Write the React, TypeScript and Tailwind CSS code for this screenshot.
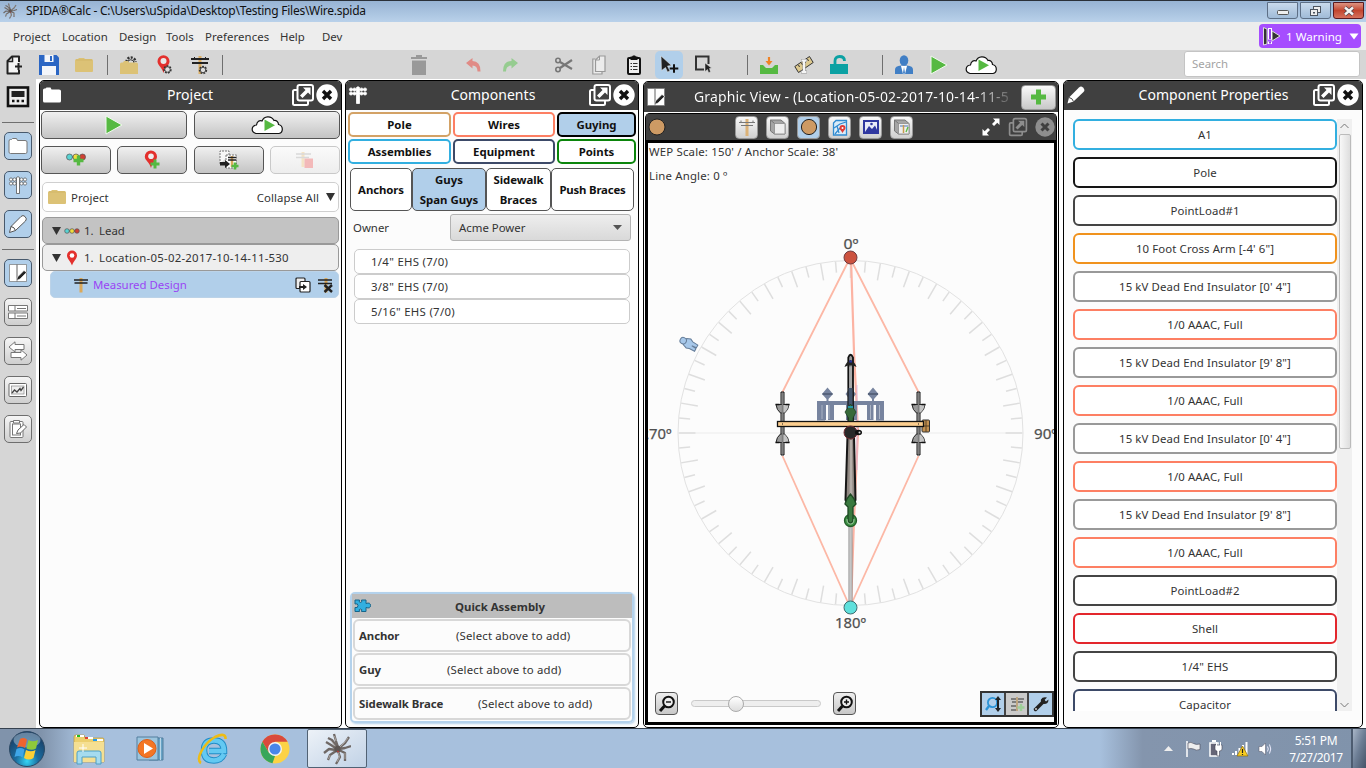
import React from 'react';

type IconProps = { w: number; h: number; className?: string; children: React.ReactNode };

function Icon({ w, h, className = '', children }: IconProps) {
  return (
    <svg width={w} height={h} viewBox={`0 0 ${w} ${h}`} className={`block shrink-0 ${className}`} fill="none">
      {children}
    </svg>
  );
}

const GREEN = '#56b942';

function Gear({ x, y, r = 3 }: { x: number; y: number; r?: number }) {
  return (
    <g>
      <circle cx={x} cy={y} r={r} stroke="#333" strokeWidth="2.4" strokeDasharray="1.6 1" />
      <circle cx={x} cy={y} r={r - 0.3} fill="#ddd" stroke="#333" strokeWidth="0.8" />
    </g>
  );
}

function Plus({ x, y, s = 3.5, w = 2.4, color = GREEN }: { x: number; y: number; s?: number; w?: number; color?: string }) {
  return <path d={`M${x - s} ${y}H${x + s}M${x} ${y - s}V${y + s}`} stroke={color} strokeWidth={w} />;
}

function PlayIcon({ className = '' }: { className?: string }) {
  return (
    <Icon w={18} h={20} className={className}>
      <path d="M1 1L17 10L1 19Z" fill={GREEN} stroke="#f1fbef" strokeWidth="1" />
    </Icon>
  );
}

function CloudIcon({ className = '' }: { className?: string }) {
  return (
    <Icon w={32} h={20} className={className}>
      <path d="M5 18.5C-.5 17 .2 10.500 5.500 10C6 6.500 8.500 5 11 6C13 1 20 .2 23 5.500C25 5 27.500 6.500 27.500 9.500C32.500 10.500 32.500 17.500 28 18.500Z" fill="#fff" stroke="#111" strokeWidth="1.200" />
      <path d="M13.500 4.500L24 10.200L13.500 16Z" fill={GREEN} />
    </Icon>
  );
}

function FolderIcon({ className = '' }: { className?: string }) {
  return (
    <Icon w={18} h={16} className={className}>
      <path d="M0 3.500Q0 2 1.500 2H3L4 1H9L10 2H16.500Q18 2 18 3.500V14Q18 15 17 15H1Q0 15 0 14Z" fill="#dcc276" />
      <path d="M1 3H17" stroke="#cfae5e" strokeWidth=".6" />
    </Icon>
  );
}

function WhiteFolder({ stroke = 'none', className = '' }: { stroke?: string; className?: string }) {
  return (
    <Icon w={20} h={18} className={className}>
      <path d="M1 4Q1 2.500 2.500 2.500H3.500L4.500 1.500H8.500L9.500 3.500H17Q19 3.500 19 5V15Q19 16.500 17.500 16.500H2.500Q1 16.500 1 15Z" fill="#fff" stroke={stroke} />
    </Icon>
  );
}

function DetachIcon({ dim = false }: { dim?: boolean }) {
  const c = dim ? '#8e8e8e' : '#fff';
  return (
    <Icon w={24} h={24}>
      <path d="M6 7H3.500Q2 7 2 8.500V20.500Q2 22 3.500 22H15.500Q17 22 17 20.500V18" stroke={c} strokeWidth="2" />
      <rect x="6.500" y="2" width="15.500" height="15.500" rx="2" stroke={c} strokeWidth="2" />
      <path d="M12 4.500H19.500V12L17 9.500L11.500 15L9 12.500L14.500 7Z" fill={c} />
    </Icon>
  );
}

function CloseIcon({ dim = false }: { dim?: boolean }) {
  return dim ? (
    <Icon w={20} h={20}>
      <circle cx="10" cy="10" r="9.700" fill="#8e8e8e" />
      <path d="M6.500 6.500L13.500 13.500M13.500 6.500L6.500 13.500" stroke="#404040" strokeWidth="3" />
    </Icon>
  ) : (
    <Icon w={22} h={22}>
      <circle cx="11" cy="11" r="10.700" fill="#fff" />
      <path d="M7 7L15 15M15 7L7 15" stroke="#111" strokeWidth="3.400" />
    </Icon>
  );
}

function Crossarm({ className = '' }: { className?: string }) {
  return (
    <Icon w={16} h={16} className={className}>
      <path d="M8 1V15.500" stroke="#dba95b" strokeWidth="3" />
      <path d="M1 3H15M1.500 6H14.500" stroke="#222" strokeWidth="1.500" />
    </Icon>
  );
}

function CrossarmLight() {
  return (
    <Icon w={20} h={20}>
      <path d="M10 2V19" stroke="#dcb277" strokeWidth="3" />
      <path d="M2 5.500H18M4 8.500H16" stroke="#777" strokeWidth="1" />
      <path d="M4 3.500V5.500M16 3.500V5.500" stroke="#777" />
    </Icon>
  );
}

function PoleWhite({ stroke = '#fff', className = '' }: { stroke?: string; className?: string }) {
  return (
    <Icon w={20} h={20} className={className}>
      <path d="M2 4.500H18M2 8.500H18" stroke={stroke} strokeWidth="1" />
      {[3, 6.500, 13.500, 17].map((x) => (
        <g key={x}>
          <circle cx={x} cy="4.500" r="1.600" fill="#fff" stroke={stroke} strokeWidth=".7" />
          <circle cx={x} cy="8.500" r="1.600" fill="#fff" stroke={stroke} strokeWidth=".7" />
        </g>
      ))}
      <path d="M8.500 2.500Q10 .8 11.500 2.500V18.500H8.500Z" fill="#fff" stroke={stroke} strokeWidth=".8" />
    </Icon>
  );
}

function Pin({ className = '' }: { className?: string }) {
  return (
    <Icon w={12} h={16} className={className}>
      <path d="M6 15.500C4.500 11 1 8.800 1 5.500A5 5 0 0 1 11 5.500C11 8.800 7.500 11 6 15.500Z" fill="#e3302d" />
      <circle cx="6" cy="5.500" r="2.300" fill="#fff" />
    </Icon>
  );
}

function Beads({ className = '' }: { className?: string }) {
  return (
    <Icon w={16} h={6} className={className}>
      <path d="M1 3H15" stroke="#444" />
      <circle cx="3" cy="3" r="2.300" fill="#59d3d3" stroke="#555" strokeWidth=".7" />
      <circle cx="8" cy="3" r="2.300" fill="#f0dc3c" stroke="#555" strokeWidth=".7" />
      <circle cx="13" cy="3" r="2.300" fill="#cf4034" stroke="#555" strokeWidth=".7" />
    </Icon>
  );
}

function PencilIcon({ stroke = 'none', className = '' }: { stroke?: string; className?: string }) {
  return (
    <Icon w={20} h={20} className={className}>
      <path d="M1.500 18.500L3 12.500L13 2.500Q15 .5 17 2.500Q19.500 5 17.500 7L7.500 16.500Z" fill="#fff" stroke={stroke} />
      <path d="M3 12.500Q6.500 13 7.500 16.500" stroke="#444" />
    </Icon>
  );
}

function NotebookIcon({ className = '' }: { className?: string }) {
  return (
    <Icon w={20} h={20} className={className}>
      <path d="M1.500 1.500H9V18.500H1.500ZM9 1.500H18.500V18.500H9Z" fill="#fff" stroke="#777" strokeWidth=".7" />
      <path d="M8.500 17.500L9.500 14L16 7.500L18.500 9.500L12 16Z" fill="#222" stroke="#fff" strokeWidth=".6" />
    </Icon>
  );
}

function SpiderIcon({ className = '' }: { className?: string }) {
  return (
    <svg width="28" height="32" viewBox="0 0 28 32" className={`block shrink-0 ${className}`} fill="none">
      <path d="M14 16L8 12L3 9M13 17L6 16L1 20M13 18L7 22L5 27M15 18L17 24L13 31M16 17L22 20L22 28M16 15L22 10L26 4M15 14L13 8L11 1M16 16L22 15L28 13M14 14L9 7L5 5" stroke="#6f6865" strokeWidth="2.300" strokeLinejoin="round" />
      <path d="M13 14L8 8M15 18L16.500 24L14 29M16 15L21 10L25 5M22 20V26M7 22L5.500 26M13 8L11.500 3" stroke="#b8b2af" strokeWidth=".8" />
      <ellipse cx="14.500" cy="16" rx="3" ry="3.600" fill="#5c5552" />
      <path d="M14 18L16 19" stroke="#c33" />
    </svg>
  );
}

function Divider({ className }: { className: string }) {
  return <div className={`h-5 w-px shrink-0 bg-[#6f6f6f] ${className}`} />;
}

function TitleBar() {
  return (
    <div className="flex h-[22px] shrink-0 border-t border-[#2a3038] bg-linear-to-b from-[#97b3d3] to-[#b9d1ea]">
      <div className="flex h-5 w-[26px] items-center pl-[2px]">
        <SpiderIcon className="h-4 w-4" />
      </div>
      <span className="text-[12px] leading-[20px] tracking-[-0.260px] text-[#111]">
        SPIDA®Calc - C:\Users\uSpida\Desktop\Testing Files\Wire.spida
      </span>
      <div className="mt-px mr-[2px] ml-auto flex gap-[2px]">
        <div className="flex h-[17px] w-[31px] items-center justify-center rounded-b-[3px] border border-[#5d6f86] bg-linear-to-b from-[#c9daec] to-[#a0bbd8]">
          <Icon w={12} h={6} className="mt-1"><rect x=".5" y=".5" width="11" height="4" rx="1" fill="#eee" stroke="#555" /></Icon>
        </div>
        <div className="flex h-[17px] w-[31px] items-center justify-center rounded-b-[3px] border border-[#5d6f86] bg-linear-to-b from-[#c9daec] to-[#a0bbd8]">
          <Icon w={13} h={12}>
            <rect x="4.500" y="1.500" width="7" height="6" fill="#eee" stroke="#4d5560" />
            <rect x="1.500" y="4.500" width="7" height="6" fill="#eee" stroke="#4d5560" />
            <rect x="4" y="7" width="2" height="1.500" fill="#4d5560" />
          </Icon>
        </div>
        <div className="flex h-[17px] w-[31px] items-center justify-center rounded-b-[3px] border border-[#5b1a1f] bg-linear-to-b from-[#dc9382] via-[#c2452f] to-[#d5705c]">
          <Icon w={14} h={10}><path d="M3 1.500L11 8.500M11 1.500L3 8.500" stroke="#50444b" strokeWidth="4" /><path d="M3 1.500L11 8.500M11 1.500L3 8.500" stroke="#f5f5f5" strokeWidth="2.400" /></Icon>
        </div>
      </div>
    </div>
  );
}

function MenuBar() {
  return (
    <div className="flex h-7 shrink-0 items-center bg-[#ededed] pt-px pr-[5px] pl-[13px] text-[#333]">
      <span className="w-[49px] tracking-[0.060px]">Project</span>
      <span className="w-[57px]">Location</span>
      <span className="w-[47px]">Design</span>
      <span className="w-[39px]">Tools</span>
      <span className="w-[75px] tracking-[0.080px]">Preferences</span>
      <span className="w-[42px]">Help</span>
      <span>Dev</span>
      <div className="mt-[-1px] ml-auto flex h-6 w-[102px] items-center rounded bg-[#a64dff] text-white">
        <Icon w={20} h={20} className="ml-[3px]">
          <path d="M1.500 1.500L5 3V18L1.500 19ZM10 5L18 10L10 15Z" fill="#333" stroke="#ddd" />
          <path d="M8 2V13.500M8 15.500V18" stroke="#fff" strokeWidth="4" />
          <path d="M8 3V13M8 15.500V17.500" stroke="#8a2be2" strokeWidth="1.800" />
        </Icon>
        <span className="ml-1 w-[59px] pt-px text-[11.600px]">1 Warning</span>
        <Icon w={10} h={7} className="ml-[4px]"><path d="M.5 .5H9.500L5 6.500Z" fill="#fff" /></Icon>
      </div>
    </div>
  );
}

function Toolbar() {
  return (
    <div className="flex h-[29px] shrink-0 items-center bg-[#d6d6d6]">
      <Icon w={16} h={20} className="ml-[6px]">
        <path d="M13 7V1.500H6L1.500 6V18.500H13V15" fill="#f5f5f5" stroke="#222" strokeWidth="2" strokeLinejoin="round" />
        <path d="M6.500 1.500V6.500H1.500" stroke="#222" strokeWidth="1.500" />
        <Plus x={12.500} y={11.500} s={3.500} w={2} color="#222" />
      </Icon>
      <Icon w={20} h={20} className="ml-[17px]">
        <path d="M0 0H17.500L20 2.500V20H0Z" fill="#2b66c4" />
        <path d="M5.500 0H14.500V7H5.500ZM3 11H17V20H3Z" fill="#f4f6fa" />
        <path d="M11 1H13V6H11Z" fill="#2b66c4" />
      </Icon>
      <FolderIcon className="ml-4" />
      <Divider className="ml-[14px]" />
      <Icon w={18} h={20} className="ml-3">
        <path d="M6.500 7A3.500 3.500 0 0 1 15.500 7" stroke="#333" strokeWidth="2.500" strokeDasharray="2 1.300" />
        <path d="M7.500 8A3 3 0 0 1 14 8" fill="#ddd" stroke="#333" />
        <path d="M0 9Q0 7.500 1.500 7.500H3L4 6H8L9 7.500H16.500Q18 7.500 18 9V19H0Z" fill="#dcc276" />
      </Icon>
      <Icon w={15} h={20} className="ml-[19px]">
        <path d="M6.500 18C5 12 .5 10.500 .5 6.300A6 6 0 0 1 12.500 6.300C12.500 10.500 8 12 6.500 18Z" fill="#e3302d" />
        <circle cx="6.500" cy="6" r="3" fill="#e8e8e8" />
        <Gear x={10.500} y={14.500} />
      </Icon>
      <Icon w={18} h={20} className="ml-[19px]">
        <path d="M9 1V19" stroke="#dcae63" strokeWidth="3" />
        <path d="M0 4H18M1 8H17" stroke="#222" strokeWidth="2" />
        <path d="M3.500 2V4M14.500 2V4" stroke="#222" />
        <Gear x={12} y={15} />
      </Icon>
      <Divider className="ml-[13px]" />
      <Icon w={16} h={20} className="ml-[188px]">
        <path d="M0 2H5V0H11V2H16V4H0ZM1 5.500H15V20H1Z" fill="#999" />
      </Icon>
      <Icon w={16} h={16} className="ml-[39px]">
        <path d="M0 6L6.500 1V4Q14.500 4 14.500 14.500H11.500Q11.500 8.500 6.500 8.500V11.500Z" fill="#e08b86" />
      </Icon>
      <Icon w={16} h={16} className="ml-5">
        <path d="M16 6L9.500 1V4Q1 4 1 14.500H4Q4 8.500 9.500 8.500V11.500Z" fill="#96cc90" />
      </Icon>
      <Icon w={18} h={16} className="ml-[37px]">
        <circle cx="3" cy="3.500" r="2.200" stroke="#777" strokeWidth="1.600" />
        <circle cx="3" cy="12.500" r="2.200" stroke="#777" strokeWidth="1.600" />
        <path d="M5 5L17 12M5 11L17 3" stroke="#777" strokeWidth="2.200" />
      </Icon>
      <Icon w={14} h={20} className="ml-[19px]">
        <path d="M3.500 4H.8V19H10V16.500" fill="#ececec" stroke="#999" strokeWidth="1.200" />
        <path d="M7.500 1H13V16.500H3.500V5Z" fill="#ececec" stroke="#999" strokeWidth="1.200" />
        <path d="M7.500 1V5H3.500" stroke="#999" />
      </Icon>
      <Icon w={14} h={20} className="ml-[21px]">
        <rect x="1" y="3" width="12" height="16" rx="1" fill="#eee" stroke="#111" strokeWidth="2" />
        <path d="M3.500 1.500H5L6 .5H8L9 1.500H10.500V5H3.500Z" fill="#111" />
        <path d="M3.500 8.500H5M6 8.500H10.500M3.500 11.500H5M6 11.500H10.500M3.500 14.500H5M6 14.500H10.500" stroke="#333" />
      </Icon>
      <div className="ml-[14px] flex h-7 w-7 items-center justify-center rounded-[5px] bg-[#b1cfea]">
        <Icon w={20} h={20}>
          <path d="M2 1L12.500 10.500L8.500 11L11 16L8.500 17L6.500 12.500L2.500 15.500Z" fill="#222" stroke="#eee" strokeWidth=".5" />
          <Plus x={15} y={13.500} s={4.300} w={2} color="#111" />
        </Icon>
      </div>
      <Icon w={17} h={20} className="ml-3">
        <path d="M13.500 9V1.500H1V14.500H9" stroke="#333" strokeWidth="2" />
        <path d="M10 8L16.500 13L14.500 13.500L15.500 17L13.500 17.500L12.500 14.500L10 16.500Z" fill="#222" stroke="#ddd" strokeWidth=".5" />
      </Icon>
      <Divider className="ml-[35px]" />
      <Icon w={18} h={18} className="ml-3">
        <path d="M0 9H3L6 12H12L15 9H18V18H0Z" fill={GREEN} />
        <path d="M9 1V8" stroke="#ef8326" strokeWidth="2.200" />
        <path d="M5.500 5H12.500L9 9.500Z" fill="#ef8326" />
      </Icon>
      <Icon w={20} h={20} className="ml-4">
        <path d="M.8 11.500L15.500 1.500L19.200 7.500L4.500 17.500Z" fill="#ddc98f" stroke="#333" />
        <path d="M4.500 10L5.500 12M7.500 8L8.500 10M10.500 6L11.500 8M13.500 4L14.500 6" stroke="#333" />
        <path d="M7 5.500H13M10 5.500V17M7 17H13" stroke="#999" strokeWidth="3" />
        <path d="M7.500 5.500H12.500M10 5.500V17M7.500 17H12.500" stroke="#f5f5f5" strokeWidth="2" />
      </Icon>
      <Icon w={18} h={20} className="ml-4">
        <path d="M0 9H18V19H0Z" fill="#0ba1a3" />
        <path d="M5 9V6Q5 1.500 9.500 1.500Q14.500 1.500 14.500 6" stroke="#0ba1a3" strokeWidth="2.800" />
      </Icon>
      <Divider className="ml-[34px]" />
      <Icon w={18} h={20} className="ml-3">
        <path d="M0 19V14.500Q0 11 6 10.500H12Q18 11 18 14.500V19Z" fill="#417fc5" />
        <ellipse cx="9" cy="5.500" rx="4.300" ry="5.300" fill="#417fc5" />
        <path d="M6 11H12L10 19H8Z" fill="#fff" />
        <path d="M9 12L10 18L9 19.500L8 18Z" fill="#417fc5" />
      </Icon>
      <PlayIcon className="ml-[17px]" />
      <CloudIcon className="ml-[17px]" />
      <div className="mt-[-2px] ml-[187px] h-[26px] w-44 rounded-[3px] border border-[#c4c4c4] bg-white pl-[7px] leading-[24px] text-[#a3a3a3]">
        Search
      </div>
    </div>
  );
}

function RailButton({ on = false, className = '', children }: { on?: boolean; className?: string; children: React.ReactNode }) {
  return (
    <div className={`flex h-7 w-7 shrink-0 items-center justify-center rounded-[5px] border ${on ? 'border-[#48596c] bg-[#b1cfea]' : 'border-[#6e6e6e] bg-linear-to-b from-[#f5f5f5] to-[#cfcfcf]'} ${className}`}>
      {children}
    </div>
  );
}

function Rail() {
  return (
    <div className="flex w-9 shrink-0 flex-col items-center bg-[#d6d6d6]">
      <Icon w={24} h={22} className="mt-[7px]">
        <rect x="2" y="1.500" width="20" height="18.500" fill="#eee" stroke="#111" strokeWidth="2.600" />
        <rect x="5.500" y="5" width="13" height="6" fill="#222" />
        <path d="M6 15H8.500M10.700 15H13.200M15.500 15H18" stroke="#111" strokeWidth="2.500" />
      </Icon>
      <div className="mt-[14px] h-px w-8 bg-[#6f6f6f]" />
      <RailButton on className="mt-[9px]"><WhiteFolder stroke="#777" /></RailButton>
      <RailButton on className="mt-[11px]"><PoleWhite stroke="#555" /></RailButton>
      <RailButton on className="mt-[11px]"><PencilIcon stroke="#555" /></RailButton>
      <div className="mt-[11px] h-px w-8 bg-[#6f6f6f]" />
      <RailButton on className="mt-[9px]"><NotebookIcon /></RailButton>
      <RailButton className="mt-[11px]">
        <Icon w={20} h={16}><path d="M.5 1.500H19.500V7H.5ZM.5 9H19.500V14.500H.5ZM7 1.500V7M7 9V14.500M9 4.500H18M9 12H18" fill="#fff" stroke="#777" /></Icon>
      </RailButton>
      <RailButton className="mt-[11px]">
        <Icon w={20} h={20}>
          <path d="M1 6L7 .8V3.500H16V8.500H7V11Z" fill="#fff" stroke="#777" />
          <path d="M19 14L13 8.800V11.500H3V16.500H13V19.200Z" fill="#fff" stroke="#777" />
        </Icon>
      </RailButton>
      <RailButton className="mt-[11px]">
        <Icon w={20} h={16}>
          <rect x="1" y="1.500" width="17.500" height="13" rx="1" fill="#fff" stroke="#666" />
          <rect x="3.500" y="4" width="12.500" height="8" fill="#eee" stroke="#888" strokeWidth=".7" />
          <path d="M4 11L6.500 8L9 10L12 6.500L13 8.500L15.500 5" stroke="#444" strokeWidth="1.300" />
        </Icon>
      </RailButton>
      <RailButton className="mt-[11px]">
        <Icon w={20} h={20}>
          <rect x="2" y="2.500" width="13" height="16" rx="1" fill="#fff" stroke="#777" />
          <rect x="4.500" y="5" width="8" height="11" stroke="#777" />
          <path d="M5.500 1.500H11.500V4H5.500Z" fill="#fff" stroke="#777" />
          <path d="M8.500 14.500L10 11L16 5.500L18.500 8L12.500 14Z" fill="#fff" stroke="#666" />
        </Icon>
      </RailButton>
    </div>
  );
}

function PanelHeader({ title, icon, pad = 'w-[47px]' }: { title: string; icon: React.ReactNode; pad?: string }) {
  return (
    <div className="flex h-[29px] shrink-0 items-center bg-[#404040] pr-[3px] pb-px pl-[2px] text-white">
      <div className={`flex ${pad}`}>{icon}</div>
      <span className="mt-[-1px] flex-1 text-center text-[14px] tracking-[0.030px]">{title}</span>
      <DetachIcon />
      <div className="ml-px"><CloseIcon /></div>
    </div>
  );
}

const greyButton = 'flex h-7 items-center justify-center rounded-[5px] border border-[#555] bg-linear-to-b from-[#f0f0f0] to-[#c4c4c4]';

function DownTriangle({ className = '' }: { className?: string }) {
  return <Icon w={9} h={8} className={className}><path d="M0 0H9L4.500 8Z" fill="#333" /></Icon>;
}

function ProjectPanel() {
  return (
    <div className="flex w-[303px] shrink-0 flex-col overflow-hidden rounded-[5px] border border-black bg-[#fcfcfc]">
      <PanelHeader title="Project" icon={<WhiteFolder />} />
      <div className="mt-px flex justify-between px-px">
        <div className={`${greyButton} w-[146px]`}><PlayIcon /></div>
        <div className={`${greyButton} w-[146px]`}><CloudIcon className="mt-[-1px]" /></div>
      </div>
      <div className="mt-[7px] flex justify-between px-px">
        <div className={`${greyButton} w-[70px]`}>
          <Icon w={20} h={16}>
            <path d="M1 5H19" stroke="#444" />
            <circle cx="3.500" cy="5" r="3" fill="#59d3d3" stroke="#555" strokeWidth=".7" />
            <circle cx="10" cy="5" r="3" fill="#f0dc3c" stroke="#555" strokeWidth=".7" />
            <circle cx="16.500" cy="5" r="3" fill="#cf4034" stroke="#555" strokeWidth=".7" />
            <Plus x={12.500} y={8.500} s={5} w={3.400} />
          </Icon>
        </div>
        <div className={`${greyButton} w-[70px]`}>
          <Icon w={16} h={20}>
            <path d="M7 18C5.500 12 .8 10.500 .8 6.500A6 6 0 0 1 13 6.500C13 10.500 8.500 12 7 18Z" fill="#e3302d" />
            <circle cx="7" cy="6.200" r="2.800" fill="#eee" />
            <Plus x={11} y={14} s={4.500} w={3} />
          </Icon>
        </div>
        <div className={`${greyButton} w-[70px]`}>
          <Icon w={20} h={20}>
            <path d="M1 14V1H10V5" fill="#f8f8f8" stroke="#777" strokeDasharray="2 1" />
            <path d="M7 5H17.500V18H7Z" fill="#fff" stroke="#777" strokeDasharray="2 1" />
            <path d="M13 6V17" stroke="#dba95b" strokeWidth="2.500" />
            <path d="M9 7.500H17M9 10H17" stroke="#222" strokeWidth="1.300" />
            <path d="M1 12H6V10L11 14L6 18V15.500H1Z" fill="#222" />
            <Plus x={16} y={16} s={3.500} w={2.600} />
          </Icon>
        </div>
        <div className="flex h-7 w-[70px] items-center justify-center rounded-[5px] border border-[#c9c9c9] bg-linear-to-b from-[#fafafa] to-[#ededed]">
          <Icon w={20} h={20}>
            <path d="M8 2V17" stroke="#f4e3c6" strokeWidth="3" />
            <path d="M1 4H16M1 7.500H14" stroke="#d9d9d9" strokeWidth="1.500" />
            <path d="M9.500 8.500H18V18H9.500Z" fill="#f3b9b9" />
          </Icon>
        </div>
      </div>
      <div className="mt-2 ml-[2px] flex h-[30px] w-[297px] items-center rounded-[5px] border border-[#cfcfcf] bg-white pr-[3px] pl-[5px] text-[#333]">
        <FolderIcon />
        <span className="mt-px ml-[5px] flex-1 tracking-[0.080px]">Project</span>
        <span className="mt-px tracking-[0.080px]">Collapse All</span>
        <DownTriangle className="ml-[7px]" />
      </div>
      <div className="mt-[5px] ml-[2px] flex h-[27px] w-[297px] items-center rounded-[5px] border border-[#999] bg-[#c3c3c3] pl-[9px] text-[#333]">
        <DownTriangle /><Beads className="ml-[3px]" /><span className="ml-[4px] w-[15px]">1.</span><span>Lead</span>
      </div>
      <div className="ml-[2px] flex h-[27px] w-[297px] items-center rounded-[5px] border border-[#999] bg-[#eee] pl-[9px] text-[#333]">
        <DownTriangle /><Pin className="ml-[5px]" /><span className="ml-[6px] w-[15px]">1.</span><span className="tracking-[0.240px]">Location-05-02-2017-10-14-11-530</span>
      </div>
      <div className="ml-[10px] flex h-[27px] w-[289px] items-center rounded-[5px] border border-[#bcd3e8] bg-[#b1cfea] pr-[4px] pl-[22px] text-[#9a45f5]">
        <Crossarm /><span className="ml-[4px] flex-1">Measured Design</span>
        <Icon w={16} h={16}>
          <rect x="1" y="1" width="9" height="10.500" rx="1" fill="#eee" stroke="#222" strokeWidth="1.200" />
          <rect x="5" y="4.500" width="10" height="10.500" rx="1" fill="#fff" stroke="#222" strokeWidth="1.200" />
          <path d="M4 9H8V7L12 10L8 13V11H4Z" fill="#222" />
        </Icon>
        <Icon w={16} h={16} className="ml-[7px]">
          <path d="M8 1V15.500" stroke="#dba95b" strokeWidth="3" />
          <path d="M0 3H14M0 6.500H14" stroke="#222" strokeWidth="1.600" />
          <path d="M6.500 8L14 15M14 8L6.500 15" stroke="#222" strokeWidth="2.400" />
        </Icon>
      </div>
    </div>
  );
}

const category = 'flex h-[25px] items-center justify-center rounded-[5px] border-2 bg-white font-bold text-[#111]';
const guyTab = 'flex h-[43px] items-center justify-center rounded-[5px] border border-[#555] text-center leading-[20px] font-bold text-[#111]';

function ComponentsPanel() {
  return (
    <div className="ml-[3px] flex w-[294px] shrink-0 flex-col overflow-hidden rounded-[5px] border border-black bg-[#fcfcfc]">
      <PanelHeader title="Components" icon={<PoleWhite />} pad="w-[50px]" />
      <div className="mt-[2px] ml-[2px] grid grid-cols-[103px_102px_79px] gap-x-[2px] gap-y-[2px]">
        <div className={`${category} border-[#d3a266]`}>Pole</div>
        <div className={`${category} border-[#fd7f63]`}>Wires</div>
        <div className={`${category} border-black bg-[#b1cfea]!`}>Guying</div>
        <div className={`${category} border-[#32afe0]`}>Assemblies</div>
        <div className={`${category} border-[#3d4a68]`}>Equipment</div>
        <div className={`${category} border-[#0b850b]`}>Points</div>
      </div>
      <div className="mt-1 ml-[4px] flex">
        <div className={`${guyTab} w-[62px] bg-white tracking-[-0.100px]`}>Anchors</div>
        <div className={`${guyTab} w-[74px] bg-[#b1cfea]`}>Guys<br />Span Guys</div>
        <div className={`${guyTab} w-[65px] bg-white tracking-[-0.050px]`}>Sidewalk<br />Braces</div>
        <div className={`${guyTab} w-[83px] bg-white tracking-[-0.180px]`}>Push Braces</div>
      </div>
      <div className="mt-[3px] flex h-[27px] items-center pl-[7px] text-[#333]">
        <span className="w-[97px]">Owner</span>
        <div className="flex h-[27px] w-[181px] items-center justify-between rounded-[3px] border border-[#b3b3b3] bg-linear-to-b from-[#eee] to-[#d9d9d9] pr-[8px] pl-[8px]">
          <span>Acme Power</span>
          <Icon w={9} h={5}><path d="M0 0H9L4.500 5Z" fill="#555" /></Icon>
        </div>
      </div>
      <div className="mt-2 ml-[8px] w-[276px] tracking-[0.300px] text-[#333]">
        {['1/4" EHS (7/0)', '3/8" EHS (7/0)', '5/16" EHS (7/0)'].map((t) => (
          <div key={t} className="flex h-[25px] items-center rounded-[5px] border border-[#ccc] bg-white pl-[16px]">{t}</div>
        ))}
      </div>
      <div className="mt-auto mb-[4px] ml-[4px] w-[284px] rounded-[5px] border-2 border-[#b4d2ec] pb-px text-[#333] shadow-[1px_1px_2px_#b4d2ec]">
        <div className="relative flex h-6 items-center justify-center bg-[#bdbdbd] pt-[2px] pl-[16px] font-bold">
          <Icon w={18} h={16} className="absolute top-1 left-[2px]">
            <path d="M1 2H5.500Q4.500 4.500 6.500 4.500Q8.500 4.500 7.500 2H12V5.500Q16.500 4 16.500 7.500Q16.500 11 12 9.500V13.500H7.500Q8.500 11 6.500 11Q4.500 11 5.500 13.500H1V9.500Q4 10.500 4 7.500Q4 5 1 6Z" fill="#32afe0" stroke="#17658a" />
          </Icon>
          Quick Assembly
        </div>
        {[
          ['Anchor', 'ml-[97px]'],
          ['Guy', 'ml-[88px]'],
          ['Sidewalk Brace', 'ml-[119px]'],
        ].map(([name, pos]) => (
          <div key={name} className="mx-[1px] mt-[1px] flex h-[33px] items-center rounded-[6px] border-2 border-[#d8d8d8] bg-[#fcfcfc] pl-[4px]">
            <span className="w-0 font-bold whitespace-nowrap tracking-[-0.080px]">{name}</span>
            <span className={`tracking-[0.160px] ${pos}`}>(Select above to add)</span>
          </div>
        ))}
      </div>
    </div>
  );
}

const CX = 850.5;
const CY = 433;

function Ticks() {
  const out: React.ReactNode[] = [];
  for (let a = 0; a < 360; a += 5) {
    const len = a % 10 === 0 ? 17 : 11;
    const s = Math.sin((a * Math.PI) / 180);
    const c = Math.cos((a * Math.PI) / 180);
    out.push(<line key={a} x1={CX + s * 172} y1={CY - c * 172} x2={CX + s * (172 - len)} y2={CY - c * (172 - len)} />);
  }
  return <g stroke="#dedede" strokeWidth="1.500">{out}</g>;
}

function Insulator({ x, y, flip = false }: { x: number; y: number; flip?: boolean }) {
  return (
    <g transform={`translate(${x} ${y}) scale(1 ${flip ? -1 : 1})`}>
      <path d="M-1.500 -31V-1H1.500V-31Z" fill="#aaa" stroke="#111" />
      <path d="M-6.500 -18.500H6.500Q6 -13 2 -10H-2Q-6 -13 -6.500 -18.500Z" fill="#999" stroke="#222" />
      <path d="M1 -18H6Q5.500 -13.500 2 -10.500H1Z" fill="#c4c4c4" />
      <path d="M-7 -18.500H-3M3 -18.500H7" stroke="#111" strokeWidth="1.700" />
      <path d="M0 -30V-2" stroke="#7e7e7e" strokeWidth="1.500" />
    </g>
  );
}

function PoleDiagram() {
  return (
    <svg width="406" height="579" viewBox="648 143 406 579" className="block" fill="none">
      <circle cx={CX} cy={CY} r="172.500" stroke="#e2e2e2" />
      <path d="M678 433H1023" stroke="#ececec" />
      <Ticks />
      <g fontFamily="'Noto Sans', sans-serif" fontSize="15" fill="#505050" stroke="#505050" strokeWidth=".25">
        <text x="843.500" y="249" textLength="15" lengthAdjust="spacingAndGlyphs">0º</text>
        <text x="835" y="627.500" textLength="31" lengthAdjust="spacingAndGlyphs">180º</text>
        <text x="640.500" y="438.500" textLength="31" lengthAdjust="spacingAndGlyphs">270º</text>
        <text x="1034" y="438.500" textLength="23" lengthAdjust="spacingAndGlyphs">90º</text>
      </g>
      <path d="M850 258L782.500 392M850 258L918.500 392M782.500 456L850 607M918.500 456L850 607" stroke="#fcb8a6" strokeWidth="1.800" />
      <path d="M851 258L854 352L858 432L854 520L851 607" stroke="#fcb3a3" strokeWidth="2.200" />
      <path d="M857 385V470" stroke="#d3b4de" strokeWidth=".8" />
      <g fill="#77849f">
        <path d="M817 401H884V420.500H876V405H825V420.500H817Z" />
        <path d="M828 404H834V420H828ZM821 404H826V420H821ZM867 404H873.500V420H867ZM877 404H883V420H877ZM846 404H857V420H846Z" />
        <path d="M827.500 387.500L833 394L828.500 399V401H826.500V399L822 394ZM873 387.500L878.500 394L874 399V401H872V399L867.500 394ZM850.500 387.500L856 394L851 401L845.500 394Z" />
      </g>
      <path d="M822.500 394H832.500M868 394H878" stroke="#4e5870" strokeWidth="1.500" />
      <path d="M829 405V419M870.500 405V419M822 405V419M879.500 405V419" stroke="#aab3c4" strokeWidth="1" />
      <path d="M850.500 520V602" stroke="#888" strokeWidth="4" />
      <path d="M850.500 520V602" stroke="#c6c6c6" strokeWidth="2.600" />
      <path d="M848.300 432V357.500Q850.500 352 853 357.500V432Z" fill="#999" stroke="#111" strokeWidth="1.800" />
      <path d="M844.500 367Q846 362 850.500 360Q855 362 856.500 367L853 365.500H848Z" fill="#222" />
      <path d="M849.300 361.500H852" stroke="#2530a0" strokeWidth="2" />
      <path d="M849.200 367V388H852V367Z" fill="#aaa" />
      <path d="M848.500 388H852.500V415H848.500Z" fill="#46566e" />
      <path d="M850.500 404L856 412L853 418V430H848.500V418L845 412Z" fill="#37693a" stroke="#1d3d21" strokeWidth=".8" />
      <path d="M848 407H853" stroke="#2595a5" strokeWidth="2" />
      <rect x="922" y="420" width="7.500" height="12" rx="1" fill="#c39151" stroke="#333" strokeWidth="1" />
      <path d="M922 426H929M926 420V432" stroke="#5b4327" strokeWidth="1" />
      <Insulator x={782.500} y={423} />
      <Insulator x={918.500} y={423} />
      <Insulator x={782.500} y={424} flip />
      <Insulator x={918.500} y={424} flip />
      <rect x="777.500" y="421.500" width="146" height="5" fill="#fcce8f" stroke="#111" strokeWidth="1.300" />
      <path d="M782.500 421V427M918.500 421V427" stroke="#111" strokeDasharray="1 1.500" />
      <path d="M847.500 436H854L855.500 500L853 504H848L845.500 500Z" fill="#8f8781" stroke="#161616" strokeWidth="2" />
      <path d="M850 440H852L852.500 496H849.500Z" fill="#b5aea9" />
      <circle cx="850.500" cy="432.500" r="6.500" fill="#292929" stroke="#722c32" />
      <ellipse cx="858.500" cy="432.500" rx="3.500" ry="2.700" fill="#111" />
      <circle cx="859.500" cy="432.500" r="1" fill="#ddd" />
      <circle cx="850.500" cy="520.500" r="6" fill="#3d9144" stroke="#215d28" strokeWidth="1.300" />
      <path d="M850.500 494Q855 499 856 504L853 507V518Q853 523 850.500 523Q848 523 848 518V507L845 504Q846 499 850.500 494Z" fill="#3a793f" stroke="#1e4824" strokeWidth="1.300" />
      <path d="M847 519Q847 524 850.500 524Q854 524 854 519" stroke="#b9dcb9" strokeWidth=".8" />
      <circle cx="850.500" cy="257.500" r="6.500" fill="#cc523f" stroke="#6f3b40" />
      <circle cx="850.500" cy="607.500" r="6.500" fill="#5fe0dc" stroke="#3c6d70" />
      <g transform="translate(688.500 343.500) rotate(28)">
        <path d="M-4 -3.500L0 -5L3 -3.500L9 -3V0L4 .5L9 1V4L3 4L0 5L-4 3.500Z" fill="#a7c8ea" stroke="#667e9a" />
        <circle cx="-6" cy="0" r="3.200" fill="#a7c8ea" stroke="#667e9a" />
      </g>
    </svg>
  );
}

const viewButton = 'flex h-[23px] w-[23px] items-center justify-center rounded-[4px] border border-[#999]';

function ZoomIcon({ plus = false }: { plus?: boolean }) {
  return (
    <Icon w={18} h={18}>
      <circle cx="10.500" cy="7" r="5.300" stroke="#111" strokeWidth="2" fill="#eee" />
      <path d="M6.500 11L2 16" stroke="#111" strokeWidth="3" />
      <path d={plus ? 'M8 7H13M10.500 4.500V9.500' : 'M8 7H13'} stroke="#111" strokeWidth="1.400" />
    </Icon>
  );
}

function BoxShape() {
  return (
    <g>
      <path d="M1.500 2H12L16 5.500V16H5.500L1.500 13Z" fill="#a5a5a5" stroke="#777" />
      <path d="M5.500 5.500H16V16H5.500Z" fill="#eee" stroke="#999" />
      <path d="M1.500 2L5.500 5.500" stroke="#777" />
    </g>
  );
}

function GraphicPanel() {
  return (
    <div className="mt-px ml-[4px] flex w-[416px] shrink-0 flex-col overflow-hidden rounded-[5px] border border-black bg-white">
      <div className="flex h-[30px] shrink-0 items-center bg-[#404040] pr-[2px] pl-[2px] text-white">
        <NotebookIcon />
        <span className="mt-[-1px] ml-[28px] flex-1 overflow-hidden bg-linear-to-r from-white from-88% to-[#555] bg-clip-text text-[14px] tracking-[0.120px] whitespace-nowrap text-transparent">Graphic View - (Location-05-02-2017-10-14-11-5</span>
        <div className="ml-[8px] flex h-[25px] w-[35px] items-center justify-center rounded-[4px] border border-[#999] bg-linear-to-b from-[#fafafa] to-[#c8c8c8]">
          <Icon w={16} h={16}><Plus x={7.500} y={8} s={7.500} w={5} /></Icon>
        </div>
      </div>
      <div className="mt-px mr-px mb-[2px] ml-px flex flex-1 flex-col overflow-hidden rounded-t-[5px] bg-black">
        <div className="mx-px mt-px flex h-[26px] items-center bg-[#404040] pr-[1px] pl-[2px]">
          <Icon w={18} h={18}><circle cx="9" cy="9" r="8" fill="#cd9a64" stroke="#222" /></Icon>
          <div className="ml-[69px] flex gap-[8px]">
            <div className={`${viewButton} bg-linear-to-b from-[#f8f8f8] to-[#d0d0d0]`}><CrossarmLight /></div>
            <div className={`${viewButton} bg-linear-to-b from-[#f8f8f8] to-[#d0d0d0]`}>
              <Icon w={18} h={18}><BoxShape /></Icon>
            </div>
            <div className={`${viewButton} bg-[#b1cfea]`}>
              <Icon w={18} h={18}><circle cx="9" cy="9" r="7.600" fill="#cd9a64" stroke="#222" /></Icon>
            </div>
            <div className={`${viewButton} bg-linear-to-b from-[#f8f8f8] to-[#d0d0d0]`}>
              <Icon w={16} h={17}><path d="M1.500 4L4 1.500H14.500V16H1.500Z" fill="#d9ebf8" stroke="#318bd0" strokeWidth="1.300" /><path d="M2 9L5 7L8 5L14 3M3 15L8 9M5 7L7 14" stroke="#318bd0" strokeWidth="1.200" /><path d="M10.500 14C9.500 11.500 7.500 11 7.500 9A3 3 0 0 1 13.500 9C13.500 11 11.500 11.500 10.500 14Z" fill="#df3c36" /><circle cx="10.500" cy="9" r="1" fill="#fff" /></Icon>
            </div>
            <div className={`${viewButton} bg-linear-to-b from-[#f8f8f8] to-[#d0d0d0]`}>
              <Icon w={16} h={14}><rect x="1" y="1" width="14" height="12" fill="#e9ebf8" stroke="#3038a0" strokeWidth="2" /><path d="M2 12L6 6L9 9L12 5.500L15 12Z" fill="#3038a0" /><circle cx="8.500" cy="4" r="1.300" fill="#3038a0" /></Icon>
            </div>
            <div className={`${viewButton} bg-linear-to-b from-[#f8f8f8] to-[#d0d0d0]`}>
              <Icon w={18} h={18}><BoxShape /><path d="M7 8H15" stroke="#4d79bc" /><path d="M10.500 7V15" stroke="#c99b50" strokeWidth="1.500" /><path d="M13 14L15 9" stroke={GREEN} strokeWidth="1.300" /></Icon>
            </div>
          </div>
          <div className="ml-auto flex items-center gap-[5px]">
            <Icon w={20} h={20}>
              <path d="M12 1.500H18.500V8L16.300 5.800L13 9L11 7L14.200 3.700Z" fill="#fff" />
              <path d="M8 18.500H1.500V12L3.700 14.200L7 11L9 13L5.800 16.300Z" fill="#fff" />
            </Icon>
            <div className="scale-[.84]"><DetachIcon dim /></div>
            <CloseIcon dim />
          </div>
        </div>
        <div className="relative mx-[3px] mt-[3px] mb-[3px] flex-1 overflow-hidden bg-[#fcfcfc]">
          <PoleDiagram />
          <div className="absolute top-0 left-px leading-[24px] tracking-[0.180px] text-[#333]">
            <div className="mt-[-3px]">WEP Scale: 150' / Anchor Scale: 38'</div>
            <div>Line Angle: 0 º</div>
          </div>
          <div className="absolute right-0 bottom-[5px] left-0 flex h-[27px] items-center pl-[7px]">
            <div className={`${viewButton} border-[#555]! bg-linear-to-b from-[#eee] to-[#c8c8c8]`}><ZoomIcon /></div>
            <div className="relative ml-[13px] h-[7px] w-[130px] rounded-full border border-[#c9c9c9] bg-[#eee]">
              <div className="absolute top-[-5px] left-[36px] h-4 w-4 rounded-full border border-[#aaa] bg-linear-to-b from-white to-[#ddd]" />
            </div>
            <div className={`${viewButton} ml-[12px] border-[#555]! bg-linear-to-b from-[#eee] to-[#c8c8c8]`}><ZoomIcon plus /></div>
            <div className="ml-auto flex h-[26px] border-2 border-[#333]">
              <div className="flex w-[22px] items-center justify-center bg-[#b1cfea]">
                <Icon w={16} h={18}><circle cx="7.500" cy="7.500" r="4.600" stroke="#2b93d6" strokeWidth="1.800" /><path d="M4 11L1 15" stroke="#2b93d6" strokeWidth="2.400" /><path d="M13 4V14" stroke="#222" strokeWidth="2" /><path d="M10 5L13 1L16 5ZM10 13L13 17L16 13Z" fill="#222" /></Icon>
              </div>
              <div className="flex w-[25px] items-center justify-center border-x-2 border-[#444] bg-[#cacaca]">
                <Icon w={16} h={16}><path d="M2 3H15M3 6H14M2 10H8M2 14H8" stroke="#666" strokeWidth="1.500" /><path d="M8 1V15" stroke="#bfa681" strokeWidth="2" /><Plus x={12} y={11.500} color="#9dcf98" /></Icon>
              </div>
              <div className="flex w-[23px] items-center justify-center bg-[#b1cfea]">
                <Icon w={16} h={16}><path d="M2.500 13.500L10.500 5.500" stroke="#222" strokeWidth="3.500" strokeLinecap="round" /><path d="M14 1.500L11.500 4L13 5.500L15.500 3.500Q15.500 8 11 8Q7 7 8 3.500Q9.500 .5 14 1.500Z" fill="#222" /><circle cx="3" cy="13" r="1" fill="#ccc" /></Icon>
              </div>
            </div>
          </div>
        </div>
      </div>
    </div>
  );
}

const properties: [string, string][] = [
  ['A1', 'border-[#32afe0]'],
  ['Pole', 'border-[#151515]'],
  ['PointLoad#1', 'border-[#444]'],
  ['10 Foot Cross Arm [-4\' 6"]', 'border-[#f0921d]'],
  ['15 kV Dead End Insulator [0\' 4"]', 'border-[#999]'],
  ['1/0 AAAC, Full', 'border-[#fd7f63]'],
  ['15 kV Dead End Insulator [9\' 8"]', 'border-[#999]'],
  ['1/0 AAAC, Full', 'border-[#fd7f63]'],
  ['15 kV Dead End Insulator [0\' 4"]', 'border-[#999]'],
  ['1/0 AAAC, Full', 'border-[#fd7f63]'],
  ['15 kV Dead End Insulator [9\' 8"]', 'border-[#999]'],
  ['1/0 AAAC, Full', 'border-[#fd7f63]'],
  ['PointLoad#2', 'border-[#444]'],
  ['Shell', 'border-[#e3262c]'],
  ['1/4" EHS', 'border-[#444]'],
  ['Capacitor', 'border-[#3d4a68]'],
];

function PropertiesPanel() {
  return (
    <div className="ml-[4px] flex w-[300px] shrink-0 flex-col overflow-hidden rounded-[5px] border border-black bg-[#fcfcfc]">
      <PanelHeader title="Component Properties" icon={<PencilIcon />} pad="w-[49px]" />
      <div className="mt-[9px] ml-[9px] flex h-[592px] overflow-hidden">
        <div className="flex w-[264px] flex-col gap-[7px] tracking-[0.110px] text-[#333]">
          {properties.map(([label, border], i) => (
            <div key={i} className={`flex h-[31px] shrink-0 items-center justify-center rounded-[6px] border-2 bg-white ${border}`}>{label}</div>
          ))}
        </div>
        <div className="flex w-[15px] flex-col items-center justify-between bg-[#f0f0f0]">
          <Icon w={9} h={6} className="mt-[4px]"><path d="M.5 5L4.500 1L8.500 5" stroke="#777" /></Icon>
          <div className="mt-[5px] h-[315px] w-[12px] rounded-[2px] border border-[#bbb] bg-linear-to-r from-[#f8f8f8] to-[#dedede]" />
          <div className="flex-1" />
          <Icon w={9} h={6} className="mb-[3px]"><path d="M.5 1L4.500 5L8.500 1" stroke="#777" /></Icon>
        </div>
      </div>
    </div>
  );
}

function Taskbar() {
  return (
    <div className="flex h-10 shrink-0 items-center border-t border-[#35414f] bg-linear-to-r from-[#8093ab] from-3% via-[#a7c0dd] via-6% to-[#a7c0dd]">
      <svg width="38" height="38" viewBox="0 0 38 38" className="ml-[8px] block shrink-0">
        <defs>
          <radialGradient id="orb" cx=".5" cy=".85" r=".8"><stop offset="0" stopColor="#35d5f5" /><stop offset=".4" stopColor="#1c6d9f" /><stop offset="1" stopColor="#183b62" /></radialGradient>
        </defs>
        <circle cx="19" cy="19" r="17.500" fill="url(#orb)" stroke="#2c4964" />
        <ellipse cx="19" cy="10" rx="13.500" ry="7.500" fill="#c5dcea" opacity=".45" />
        <path d="M12 9Q15.500 7 19 9.500L17 18Q13 15.500 9 17.500Z" fill="#ee6530" />
        <path d="M20.500 10Q24.500 12.500 30 10L28 18.500Q24 21 18.500 18.500Z" fill="#8fca3b" />
        <path d="M8.500 19Q12.500 17 16.500 19.500L14.500 27.500Q11 25 6.500 27Z" fill="#3fa6e8" />
        <path d="M18 20Q23 22.500 27.500 20L25.500 28Q21 31 16 28Z" fill="#fdd035" />
      </svg>
      <Icon w={32} h={32} className="ml-[27px]">
        <path d="M1 8V4Q1 2 3 2H11L12 5H30Q31 5 31 7V29H1Z" fill="#eccf6d" stroke="#b9953c" strokeWidth=".7" />
        <path d="M3 3H11M13 5H20M21 7H30" stroke="#fff" strokeWidth="2" />
        <path d="M4 3H7" stroke="#2b2" strokeWidth="2" /><path d="M12 5H15" stroke="#d43" strokeWidth="2" /><path d="M20 7H24" stroke="#29e" strokeWidth="2" />
        <path d="M1 9H31V29H1Z" fill="#f5df92" />
        <path d="M4 31V20Q4 18 6 18H26Q28 18 28 20V31H23V24H9V31Z" fill="#a5dbef" stroke="#4c9fc5" />
        <path d="M10 11V19M6 15H14" stroke="#fff" />
      </Icon>
      <Icon w={30} h={26} className="ml-[31px]">
        <path d="M13 2H27V24H13Z" fill="#68a3c6" stroke="#527f9e" /><path d="M1 1H22V24H1Z" fill="#9cc5de" stroke="#527f9e" /><path d="M24.500 2V24" stroke="#b9d7e8" />
        <circle cx="11" cy="12.500" r="9" fill="#f37625" stroke="#dc5e18" /><path d="M8 7L17 12.500L8 18Z" fill="#fff" />
      </Icon>
      <Icon w={32} h={32} className="ml-[31px]">
        <path d="M27 21Q24 27.500 17 27.500Q7 27.500 7 17.500Q7 7.500 17 7.500Q27 7.500 27 18H12" stroke="#218cc6" strokeWidth="6.500" />
        <path d="M27 21Q24 27.500 17 27.500Q7 27.500 7 17.500Q7 7.500 17 7.500Q27 7.500 27 18H12" stroke="#63c9f2" strokeWidth="4.600" />
        <path d="M4 30C-2 27 6 11 18 4Q29 -1 28.500 6" stroke="#edbc17" strokeWidth="2.600" />
      </Icon>
      <svg width="30" height="30" viewBox="0 0 30 30" className="ml-[31px] block shrink-0">
        <circle cx="15" cy="15" r="14.500" fill="#fcd245" />
        <path d="M2.400 7.800A14.500 14.500 0 0 1 27.600 7.800H15L8.800 18.600Z" fill="#d94a3c" />
        <path d="M2.400 7.800L8.800 18.600L15 22L12.500 29.300A14.500 14.500 0 0 1 2.400 7.800Z" fill="#37a65b" />
        <circle cx="15" cy="15" r="7" fill="#f4f4f4" /><circle cx="15" cy="15" r="5.600" fill="#4a86ea" />
      </svg>
      <div className="ml-[17px] flex h-[39px] w-[60px] items-center justify-center rounded-[2px] border border-[#516274] bg-linear-to-br from-[#edf2f8] to-[#c1d2e6]">
        <SpiderIcon />
      </div>
      <div className="ml-auto flex h-full w-[266px] items-center bg-linear-to-r from-transparent via-[#8495ad] via-16% to-[#8093ab] text-white">
        <Icon w={9} h={5} className="ml-[64px]"><path d="M0 5L4.500 0L9 5Z" fill="#eee" /></Icon>
        <Icon w={16} h={18} className="ml-[12px]"><path d="M2 1V17" stroke="#fff" strokeWidth="1.500" /><path d="M3 3Q6 1.500 8.500 3.500Q11 5 15 4V9.500Q11 11 8.500 9Q6 8 3 9Z" fill="#eee" stroke="#445" strokeWidth=".6" /></Icon>
        <Icon w={16} h={18} className="ml-[7px]"><rect x="2" y="3" width="8" height="13" fill="#667" stroke="#fff" strokeWidth="1.500" /><path d="M4 1H8" stroke="#fff" strokeWidth="2" /><path d="M7 5H14V9Q14 11 11.500 11V16H9V11Q7 11 7 9Z" fill="#fff" stroke="#445" strokeWidth=".6" /><path d="M8.500 2V6M12.500 2V6" stroke="#fff" /></Icon>
        <Icon w={18} h={18} className="ml-[8px]"><path d="M1 15V13M4 15V11M7.500 15V8M11 15V5M14.500 15V2" stroke="#fff" strokeWidth="2" /><path d="M10.500 6L16 16H5Z" fill="#f8cd20" stroke="#8a6a10" strokeWidth=".7" /><path d="M10.500 9V13M10.500 14V15" stroke="#222" strokeWidth="1.200" /></Icon>
        <Icon w={16} h={16} className="ml-[8px]"><path d="M1 5.500H4L7.500 2V14L4 10.500H1Z" fill="#fff" stroke="#556" strokeWidth=".5" /><path d="M9.500 5.500Q11 8 9.500 10.500M11.500 3.500Q14 8 11.500 12.500" stroke="#eef" /></Icon>
        <div className="ml-[12px] w-[60px] pt-px text-center text-[12px] leading-[17px] tracking-[-0.400px]">
          <div>5:51 PM</div>
          <div>7/27/2017</div>
        </div>
        <div className="ml-auto h-full w-[15px] border-l-2 border-[#4d5c70] bg-linear-to-br from-[#a9b6c8] via-[#6c7d94] to-[#465468]" />
      </div>
    </div>
  );
}

export default function App() {
  return (
    <div className="flex h-[768px] w-[1366px] flex-col overflow-hidden bg-[#f4f4f4] font-['Noto_Sans',sans-serif] text-[11.400px] whitespace-nowrap">
      <TitleBar />
      <MenuBar />
      <Toolbar />
      <div className="flex h-[649px] shrink-0 bg-white">
        <Rail />
        <div className="flex pt-px pl-[3px]">
          <ProjectPanel />
          <ComponentsPanel />
          <GraphicPanel />
          <PropertiesPanel />
        </div>
      </div>
      <Taskbar />
    </div>
  );
}
